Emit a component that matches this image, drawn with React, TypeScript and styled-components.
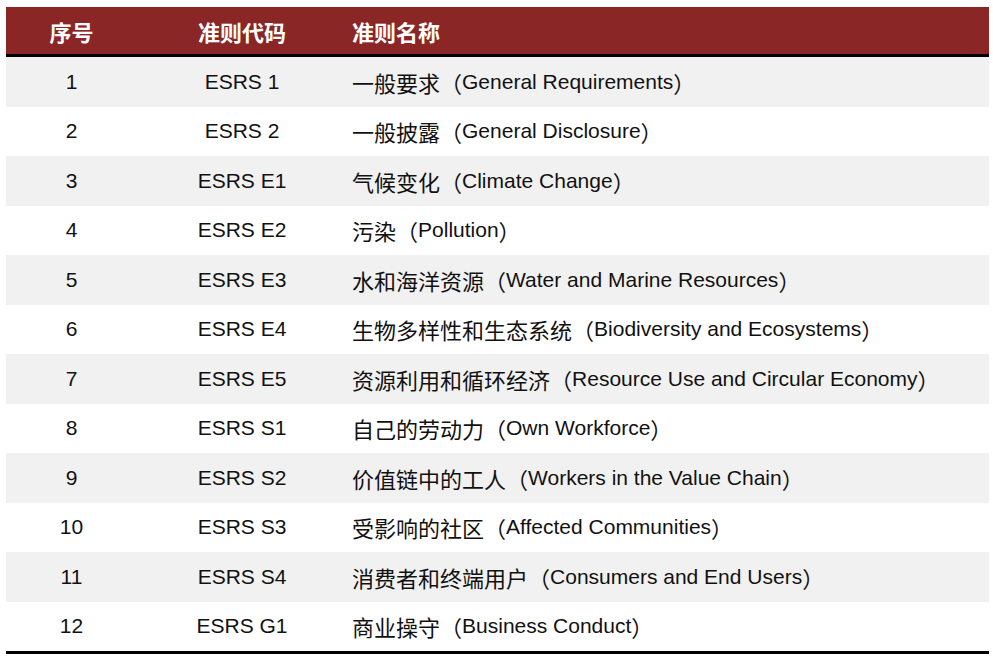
import React from "react";
import styled, { createGlobalStyle } from "styled-components";

const rows = [
  { no: 1, code: "ESRS 1", zh: "一般要求", en: "General Requirements" },
  { no: 2, code: "ESRS 2", zh: "一般披露", en: "General Disclosure" },
  { no: 3, code: "ESRS E1", zh: "气候变化", en: "Climate Change" },
  { no: 4, code: "ESRS E2", zh: "污染", en: "Pollution" },
  { no: 5, code: "ESRS E3", zh: "水和海洋资源", en: "Water and Marine Resources" },
  { no: 6, code: "ESRS E4", zh: "生物多样性和生态系统", en: "Biodiversity and Ecosystems" },
  { no: 7, code: "ESRS E5", zh: "资源利用和循环经济", en: "Resource Use and Circular Economy" },
  { no: 8, code: "ESRS S1", zh: "自己的劳动力", en: "Own Workforce" },
  { no: 9, code: "ESRS S2", zh: "价值链中的工人", en: "Workers in the Value Chain" },
  { no: 10, code: "ESRS S3", zh: "受影响的社区", en: "Affected Communities" },
  { no: 11, code: "ESRS S4", zh: "消费者和终端用户", en: "Consumers and End Users" },
  { no: 12, code: "ESRS G1", zh: "商业操守", en: "Business Conduct" },
];

export default function App() {
  return (
    <>
      <GlobalStyle />
      <Page>
        <Table>
          <Header>
            <HeadCell $center>序号</HeadCell>
            <HeadCell $center>准则代码</HeadCell>
            <HeadCell>准则名称</HeadCell>
          </Header>
          <Body>
            {rows.map((r, i) => (
              <Row key={r.no} $shaded={i % 2 === 0}>
                <Cell $center>{r.no}</Cell>
                <Cell $center>{r.code}</Cell>
                <Cell>
                  <Zh>{r.zh}（</Zh>
                  {r.en}
                  <Zh>）</Zh>
                </Cell>
              </Row>
            ))}
          </Body>
        </Table>
      </Page>
    </>
  );
}

const GlobalStyle = createGlobalStyle`
  html, body {
    margin: 0;
    background: #ffffff;
  }
`;

const Page = styled.div`
  width: 993px;
  height: 661px;
  box-sizing: border-box;
  padding: 7px 4px 0 6px;
  background: #fff;
`;

const Table = styled.div`
  width: 983px;
  display: flex;
  flex-direction: column;
  border-bottom: 3px solid #000;
`;

const Header = styled.div`
  display: grid;
  grid-template-columns: 131px 210px 1fr;
  height: 47px;
  background: #8a2726;
  border-bottom: 3px solid #000;
`;

const HeadCell = styled.div<{ $center?: boolean }>`
  display: flex;
  align-items: center;
  justify-content: ${(p) => (p.$center ? "center" : "flex-start")};
  padding-left: ${(p) => (p.$center ? "0" : "5px")};
  color: #fff;
  font-family: "Noto Sans CJK SC", "Liberation Sans", sans-serif;
  font-weight: 700;
  font-size: 22px;
`;

const Body = styled.div`
  display: flex;
  flex-direction: column;
`;

const Row = styled.div<{ $shaded: boolean }>`
  display: grid;
  grid-template-columns: 131px 210px 1fr;
  height: 49.5px;
  background: ${(p) => (p.$shaded ? "#f1f1f1" : "#fff")};
`;

const Cell = styled.div<{ $center?: boolean }>`
  display: flex;
  align-items: center;
  justify-content: ${(p) => (p.$center ? "center" : "flex-start")};
  padding-left: ${(p) => (p.$center ? "0" : "5px")};
  color: #111;
  font-family: "Liberation Sans", "Noto Sans CJK SC", sans-serif;
  font-size: 21px;
  white-space: nowrap;
`;

const Zh = styled.span`
  font-family: "Noto Sans CJK SC", sans-serif;
  font-size: 22px;
`;
